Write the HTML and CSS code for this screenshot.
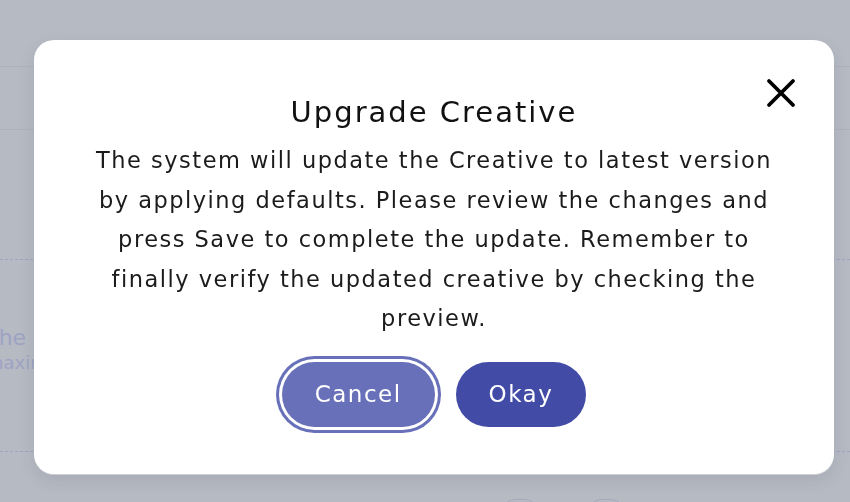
FILE: index.html
```html
<!DOCTYPE html>
<html>
<head>
    <title>Upgrade Creative</title>
    <meta charset="utf-8">
    <link rel="stylesheet" href="styles.css">
</head>
<body>
<div class="page">
    <div class="row row-top"></div>
    <div class="row row-second"></div>
    <div class="row row-dashed"></div>
    <div class="hint">
        <p class="hint-title">the height</p>
        <p class="hint-sub">maximum</p>
    </div>
    <div class="row row-dashed row-last"></div>
    <div class="page-actions">
        <span class="ghost-btn"></span>
        <span class="ghost-btn"></span>
    </div>
</div>

<div class="overlay">
    <div class="modal">
        <button class="close" type="button" aria-label="Close">
            <svg width="30" height="30" viewBox="0 0 30 30">
                <path d="M3 3 L27 27 M27 3 L3 27" stroke="#000" stroke-width="3.8" stroke-linecap="round" fill="none"/>
            </svg>
        </button>
        <h1 class="modal-title">Upgrade Creative</h1>
        <p class="modal-text">The system will update the Creative to latest version by applying defaults. Please review the changes and press Save to complete the update. Remember to finally verify the updated creative by checking the preview.</p>
        <div class="modal-actions">
            <button class="btn btn-cancel" type="button">Cancel</button>
            <button class="btn btn-okay" type="button">Okay</button>
        </div>
    </div>
</div>
</body>
</html>
```

FILE: styles.css
```css
body {
    margin: 0;
    font-family: "DejaVu Sans", "Noto Sans", sans-serif;
    background: #b6bac3;
    overflow: hidden;
}

.page {
    height: 502px;
    overflow: hidden;
}

.row {
    height: 0;
    border-top: 1px solid #adb2bb;
}

.row-top {
    margin-top: 66px;
}

.row-second {
    margin-top: 62px;
}

.row-dashed {
    border-top: 1px dashed #9ea3c2;
    margin-top: 129px;
}

.row-last {
    margin-top: 76px;
}

.hint {
    margin-top: 65px;
    color: #9ea3c4;
    white-space: nowrap;
}

.hint p {
    margin: 0;
}

.hint .hint-title {
    font-size: 22px;
    line-height: 26px;
    margin-left: -10px;
}

.hint .hint-sub {
    font-size: 18px;
    line-height: 24px;
    margin-left: -14px;
}

.page-actions {
    display: flex;
    gap: 40px;
    margin: 47px 0 0 497px;
}

.ghost-btn {
    width: 44px;
    height: 40px;
    border: 1px solid #a3a9bb;
    border-radius: 20px;
}

.overlay {
    position: fixed;
    top: 0;
    left: 0;
    right: 0;
    bottom: 0;
}

.modal {
    position: absolute;
    top: 40px;
    left: 34px;
    width: 800px;
    height: 434px;
    box-sizing: border-box;
    padding: 52px 40px 0;
    background: #fff;
    border-radius: 20px;
    box-shadow: 0 1px 0 #cdd0d5, 0 6px 16px rgba(60, 66, 80, .12);
    text-align: center;
}

.close {
    position: absolute;
    top: 38px;
    right: 38px;
    width: 30px;
    height: 30px;
    padding: 0;
    border: 0;
    background: none;
}

.close svg {
    display: block;
}

.modal-title {
    margin: 0 0 9px;
    font-size: 29px;
    font-weight: 500;
    line-height: 40px;
    letter-spacing: 2px;
    color: #111;
}

.modal-text {
    margin: 0 14px;
    font-size: 22.5px;
    line-height: 39.5px;
    letter-spacing: 1.5px;
    color: #1b1b1b;
}

.modal-actions {
    display: flex;
    justify-content: center;
    gap: 21px;
    margin-top: 23px;
}

.btn {
    height: 65px;
    padding: 0 33px;
    border: 0;
    border-radius: 33px;
    font-family: inherit;
    font-size: 23px;
    letter-spacing: 1.5px;
    color: #fff;
}

.btn-cancel {
    background: #6770b9;
    box-shadow: 0 0 0 3px #fff, 0 0 0 6px #6770b9;
}

.btn-okay {
    background: #424ca7;
}
```
